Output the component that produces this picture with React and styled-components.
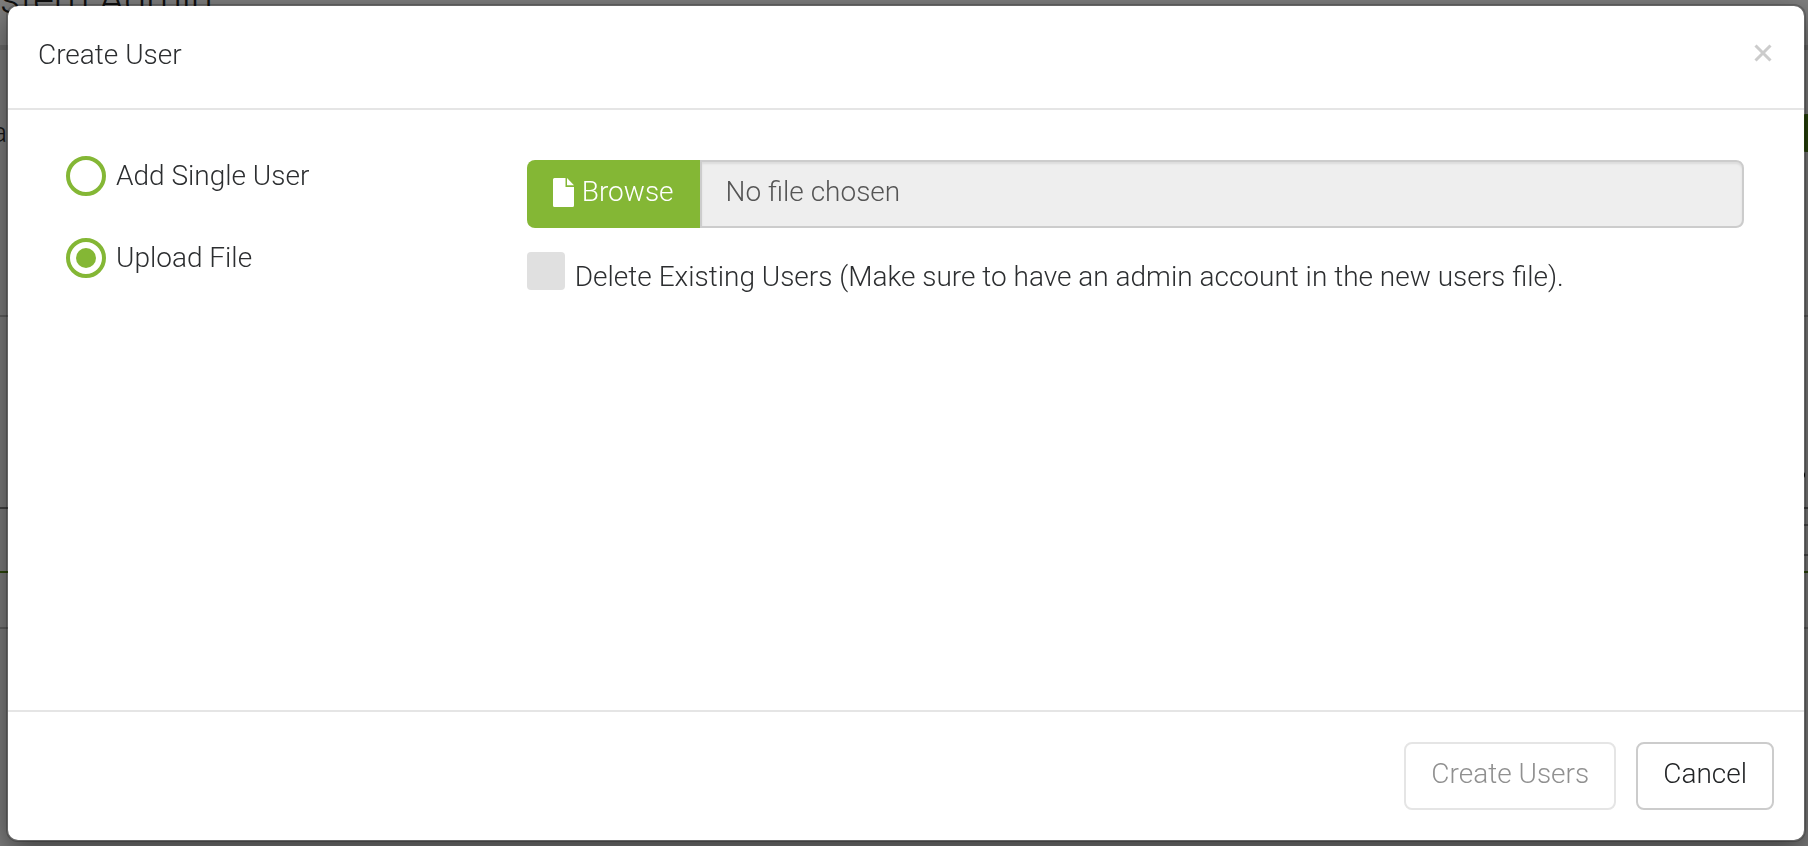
import React, { useState } from 'react';
import styled, { createGlobalStyle } from 'styled-components';

const green = '#84b735';

const GlobalStyle = createGlobalStyle`
    *, *::before, *::after {
        box-sizing : border-box;
    }
    html, body {
        margin : 0;
        height : 100%;
        overflow : hidden;
    }
    body, button, input {
        font-family : Roboto, 'Open Sans', sans-serif;
        font-size : 28px;
        font-weight : 300;
        line-height : 40px;
        color : #2c2e30;
    }
`;

const Page = styled.div`
    background : #fff;
    overflow : hidden;
`;

const PageHeader = styled.header`
    height : 50px;
    border-bottom : 5px solid #dcdcdc;
`;

const PageTitle = styled.h1`
    margin : 0;
    font-size : 40px;
    font-weight : 300;
    line-height : 0;
    color : #222;
`;

const PageToolbar = styled.div`
    display : flex;
    justify-content : space-between;
    align-items : center;
    height : 168px;
    padding-bottom : 2px;
`;

const PageLabel = styled.span`
    margin-left : -8px;
`;

const PageAction = styled.button`
    width : 60px;
    height : 38px;
    margin-right : -50px;
    border : 0;
    border-radius : 8px;
    background : #589018;
`;

const PageRow = styled.div`
    display : flex;
    justify-content : flex-end;
    align-items : ${({ $align }) => $align || 'center'};
    height : ${({ $height }) => $height};
    border-top : 2px solid ${({ $color }) => $color || '#c4c4c4'};
`;

const PageMarker = styled.span`
    width : 10px;
    height : 10px;
    margin : 0 3px 27px 0;
    border-radius : 50%;
    background : #000;
`;

const PageFilter = styled.div`
    width : 120px;
    height : 32px;
    border : solid #a0a0a0;
    border-width : 2px 0;
`;

const Backdrop = styled.div`
    position : fixed;
    inset : 0;
    padding : 4px 2px 4px 6px;
    background : rgba(0, 0, 0, 0.5);
`;

const Dialog = styled.section`
    background : #fff;
    background-clip : padding-box;
    border : 2px solid rgba(0, 0, 0, 0.2);
    border-radius : 12px;
    box-shadow : 0 10px 30px rgba(0, 0, 0, 0.5);
`;

const DialogHeader = styled.header`
    display : flex;
    justify-content : space-between;
    align-items : flex-start;
    padding : 29px 32px 33px 30px;
    border-bottom : 2px solid #e5e5e5;
`;

const DialogTitle = styled.h2`
    margin : 0;
    font-size : 28px;
    font-weight : 300;
    line-height : 40px;
`;

const CloseButton = styled.button`
    display : flex;
    padding : 9px 0;
    border : 0;
    background : none;
    color : #ccc;
    cursor : pointer;
`;

const DialogBody = styled.div`
    display : grid;
    grid-template-columns : 1fr 3fr;
    align-items : start;
    gap : 55px;
    min-height : 600px;
    padding : 46px 60px 46px 58px;
`;

const RadioList = styled.div`
    display : grid;
    gap : 42px;
`;

const RadioLabel = styled.label`
    display : flex;
    align-items : center;
    gap : 10px;
    cursor : pointer;
`;

const Radio = styled.input`
    appearance : none;
    flex : none;
    width : 40px;
    height : 40px;
    margin : 0;
    border : 4px solid ${green};
    border-radius : 50%;
    padding : 6px;
    background : ${green} content-box;
    &:not(:checked) {
        background : none;
    }
`;

const UploadForm = styled.div`
    display : grid;
    gap : 24px;
    padding-top : 4px;
`;

const FileField = styled.div`
    display : flex;
    height : 68px;
`;

const BrowseButton = styled.button`
    display : flex;
    align-items : center;
    gap : 8px;
    padding : 0 26px 4px;
    border : 0;
    border-radius : 8px 0 0 8px;
    background : ${green};
    color : #fff;
    cursor : pointer;
`;

const FileName = styled.input`
    flex : 1;
    min-width : 0;
    padding : 0 24px 4px;
    border : 2px solid #ccc;
    border-radius : 0 8px 8px 0;
    background : #eee;
    box-shadow : inset 0 2px 2px rgba(0, 0, 0, 0.08);
    color : #555;
    outline : none;
`;

const CheckLabel = styled.label`
    display : flex;
    align-items : flex-start;
    gap : 10px;
    cursor : pointer;
`;

const CheckText = styled.span`
    padding-top : 5px;
`;

const CheckBox = styled.input`
    appearance : none;
    flex : none;
    width : 38px;
    height : 38px;
    margin : 0;
    border-radius : 4px;
    background : #e0e0e0;
    &:checked {
        background : ${green};
    }
`;

const DialogFooter = styled.footer`
    display : flex;
    justify-content : flex-end;
    gap : 20px;
    padding : 30px;
    border-top : 2px solid #e5e5e5;
`;

const FooterButton = styled.button`
    height : 68px;
    padding : 0 25px 4px;
    border : 2px solid #ccc;
    border-radius : 8px;
    background : #fff;
    color : #222426;
    cursor : pointer;
    &:disabled {
        border-color : #e5e5e5;
        color : #909090;
        cursor : not-allowed;
    }
`;

const FileIcon = () => (
    <svg width="21" height="29" viewBox="0 0 21 29" fill="currentColor" aria-hidden="true">
        <path d="M0 1.5Q0 0 1.500 0H12.500V9H21V27.500Q21 29 19.500 29H1.500Q0 29 0 27.500Z" />
        <path d="M14 0L21 7.300H14Z" />
    </svg>
);

const CloseIcon = () => (
    <svg width="18" height="18" viewBox="0 0 18 18" stroke="currentColor" strokeWidth="3" aria-hidden="true">
        <path d="M1.500 1.500L16.500 16.500M16.500 1.500L1.500 16.500" />
    </svg>
);

const options = [
    { value: 'single', label: 'Add Single User' },
    { value: 'upload', label: 'Upload File' },
];

const SystemAdminPage = () => (
    <Page aria-hidden="true">
        <PageHeader>
            <PageTitle>stem Admin</PageTitle>
        </PageHeader>
        <PageToolbar>
            <PageLabel>a</PageLabel>
            <PageAction tabIndex={-1} />
        </PageToolbar>
        <PageRow $height="97px" $color="#fff" />
        <PageRow $height="192px" $align="flex-end">
            <PageMarker />
        </PageRow>
        <PageRow $height="64px" $color="#8a8a8a">
            <PageFilter />
        </PageRow>
        <PageRow $height="56px" $color="#5b9015" />
        <PageRow $height="220px" />
    </Page>
);

const CreateUserDialog = () => {
    const [mode, setMode] = useState('upload');
    const [deleteExisting, setDeleteExisting] = useState(false);
    return (
        <Dialog role="dialog" aria-labelledby="dialog-title">
            <DialogHeader>
                <DialogTitle id="dialog-title">Create User</DialogTitle>
                <CloseButton aria-label="Close"><CloseIcon /></CloseButton>
            </DialogHeader>
            <DialogBody>
                <RadioList>
                    {options.map(({ value, label }) => (
                        <RadioLabel key={value}>
                            <Radio
                                type="radio"
                                name="mode"
                                value={value}
                                checked={mode === value}
                                onChange={() => setMode(value)}
                            />
                            {label}
                        </RadioLabel>
                    ))}
                </RadioList>
                <UploadForm>
                    <FileField>
                        <BrowseButton><FileIcon />Browse</BrowseButton>
                        <FileName aria-label="File" value="No file chosen" readOnly />
                    </FileField>
                    <CheckLabel>
                        <CheckBox
                            type="checkbox"
                            checked={deleteExisting}
                            onChange={() => setDeleteExisting(!deleteExisting)}
                        />
                        <CheckText>
                            Delete Existing Users (Make sure to have an admin account in the new users file).
                        </CheckText>
                    </CheckLabel>
                </UploadForm>
            </DialogBody>
            <DialogFooter>
                <FooterButton disabled>Create Users</FooterButton>
                <FooterButton>Cancel</FooterButton>
            </DialogFooter>
        </Dialog>
    );
};

const App = () => (
    <>
        <GlobalStyle />
        <SystemAdminPage />
        <Backdrop>
            <CreateUserDialog />
        </Backdrop>
    </>
);

export default App;
